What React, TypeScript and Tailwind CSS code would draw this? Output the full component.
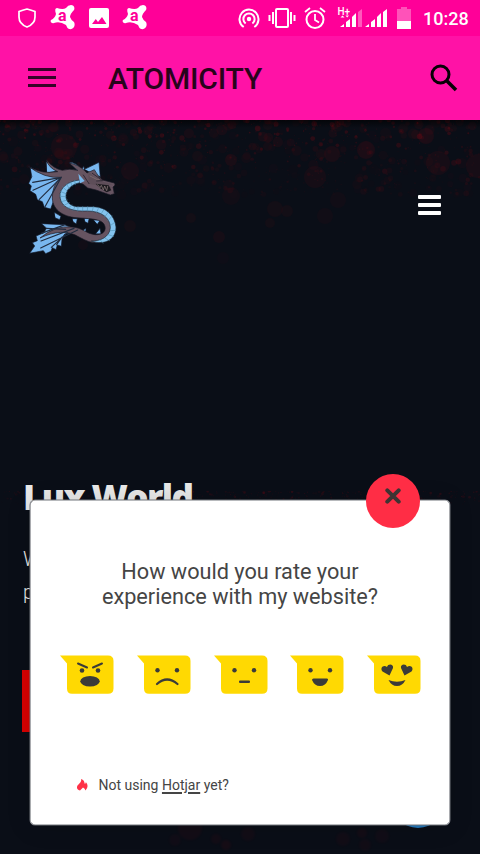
import type { ReactNode } from 'react';

type Speck = { x: number; y: number; r: number; o: number };

function makeSpecks(count: number, seed: number, width: number, height: number, max: number): Speck[] {
  let s = seed;
  const rnd = () => {
    s = (s * 16807) % 2147483647;
    return s / 2147483647;
  };
  return Array.from({ length: count }, () => {
    const x = rnd() * width;
    const depth = Math.pow(rnd(), 1.4);
    const r = 0.5 + Math.pow(rnd(), 3) * max;
    return { x, y: depth * height, r, o: (0.08 + rnd() * 0.28) * (1 - depth * 0.7) * (r > 3 ? 0.35 : 1) };
  });
}

const topSpecks = makeSpecks(950, 4242, 480, 75, 5);
const bandSpecks = makeSpecks(420, 977, 480, 13, 1);
const footSpecks: Speck[] = [
  { x: 190, y: 8, r: 12, o: 0.13 }, { x: 175, y: 20, r: 6, o: 0.09 }, { x: 226, y: 25, r: 5, o: 0.16 },
  { x: 216, y: 19, r: 5, o: 0.12 }, { x: 248, y: 14, r: 7, o: 0.1 }, { x: 343, y: 19, r: 7, o: 0.1 },
  { x: 362, y: 13, r: 5, o: 0.12 }, { x: 382, y: 16, r: 7, o: 0.09 }, { x: 365, y: 25, r: 6, o: 0.1 },
];
const lowSpecks: Speck[] = [
  { x: 219, y: 117, r: 6, o: 0.09 }, { x: 223, y: 138, r: 6, o: 0.04 }, { x: 130, y: 106, r: 6, o: 0.07 },
  { x: 191, y: 98, r: 5, o: 0.07 }, { x: 275, y: 89, r: 8, o: 0.07 }, { x: 287, y: 91, r: 6, o: 0.07 },
  { x: 270, y: 103, r: 5, o: 0.07 }, { x: 325, y: 96, r: 8, o: 0.06 }, { x: 338, y: 80, r: 8, o: 0.06 },
  { x: 315, y: 57, r: 11, o: 0.09 }, { x: 438, y: 43, r: 12, o: 0.1 }, { x: 478, y: 46, r: 12, o: 0.11 },
  { x: 426, y: 16, r: 8, o: 0.14 }, { x: 366, y: 30, r: 9, o: 0.14 }, { x: 332, y: 34, r: 8, o: 0.12 },
  { x: 231, y: 40, r: 6, o: 0.13 }, { x: 130, y: 51, r: 9, o: 0.1 }, { x: 64, y: 27, r: 13, o: 0.1 },
  { x: 231, y: 76, r: 9, o: 0.06 }, { x: 83, y: 125, r: 5, o: 0.06 },
];

function Specks({ items, height, className }: { items: Speck[]; height: number; className: string }) {
  return (
    <svg className={className} width="480" height={height} viewBox={`0 0 480 ${height}`} fill="#a50812">
      {items.map((p, i) => (
        <circle key={i} cx={p.x} cy={p.y} r={p.r} opacity={p.o} />
      ))}
    </svg>
  );
}

function AvastIcon() {
  return (
    <svg width="26" height="26" viewBox="0 0 26 26">
      <path d="M7 3Q13 5 16 3Q18 0 21 0C24 0 25 3 24 5Q20 9 20 12Q21 15 24 17C26 21 23 25 19 24Q17 23 16 20Q10 16 4 18C1 19 0 16 1 15Q5 13 6 9Q4 3 7 3Z" fill="white" />
      <text x="8" y="15.500" fill="#ff0098" className="font-[family-name:Roboto] text-[16px] font-bold">a</text>
    </svg>
  );
}

function StatusBar() {
  return (
    <div className="flex h-9 items-center bg-[#ff0098] text-white">
      <svg className="ml-[17px]" width="20" height="22" viewBox="0 0 20 22" fill="none" stroke="white" strokeWidth="1.7">
        <path d="M10 2Q14.5 3 18 4.6V10C18 15 14.5 18.3 10 20C5.500 18.300 2 15 2 10V4.600Q5.500 3 10 2Z" />
      </svg>
      <div className="ml-[13px]"><AvastIcon /></div>
      <svg className="ml-[13px]" width="20" height="20" viewBox="0 0 20 20">
        <rect width="20" height="20" rx="2" fill="white" />
        <path d="M3 16L6.800 11L9 14L13 9L17.500 16Z" fill="#ff0098" />
      </svg>
      <div className="ml-[13px]"><AvastIcon /></div>
      <svg className="ml-[89px]" width="24" height="22" viewBox="0 0 24 22" fill="none" stroke="white" strokeWidth="2">
        <path d="M6.700 20A9.500 9.500 0 1 1 17.300 20M8.600 16.500A5.600 5.600 0 1 1 15.400 16.500" />
        <circle cx="12" cy="12" r="2.200" fill="white" stroke="none" />
      </svg>
      <svg className="ml-[7px]" width="28" height="22" viewBox="0 0 28 22" fill="none" stroke="white" strokeWidth="2">
        <rect x="8" y="2" width="12" height="18" rx="1" />
        <path d="M5 5V17M1.500 8V14M23 5V17M26.500 8V14" />
      </svg>
      <svg className="ml-[8px]" width="22" height="22" viewBox="0 0 22 22" fill="none" stroke="white" strokeWidth="2">
        <circle cx="11" cy="12.500" r="8.500" />
        <path d="M1 5L6 1M16 1L21 5M11 7V13L15 15.500" strokeWidth="1.800" />
      </svg>
      <svg className="ml-[11px]" width="52" height="24" viewBox="0 0 52 24" fill="white">
        <text x="0.500" y="8.500" className="text-[10px] font-medium">H+</text>
        <path d="M3.500 11.500L5.500 9.500L7.500 11.500M8.500 9.500H12L10.200 11.500Z" />
        <path d="M3 21L7 18V21ZM9 16L13 13V21H9ZM15 11L19 7V21H15ZM28 21L32 18V21ZM34 16L38 13V21H34ZM40 11L44 7V21H40ZM46 6L50 3V21H46Z" />
        <path d="M21 6L25 3V21H21Z" opacity=".35" />
      </svg>
      <svg className="ml-[8px]" width="14" height="24" viewBox="0 0 14 24" fill="white">
        <path d="M4 1H10V3H14V15H0V3H4Z" opacity=".32" />
        <path d="M0 15H14V23H0Z" />
      </svg>
      <span className="ml-[12px] mt-[1px] whitespace-nowrap text-[18px] font-medium leading-5">10:28</span>
    </div>
  );
}

function AppBar() {
  return (
    <div className="flex h-[84px] items-center bg-[#ff12a6]">
      <div className="ml-7 mt-[-1px] flex w-7 flex-col gap-[5px]">
        <span className="h-[3px] bg-[#360329]" />
        <span className="h-[3px] bg-[#360329]" />
        <span className="h-[3px] bg-[#360329]" />
      </div>
      <h1 className="ml-[52px] mt-[2px] flex-1 text-[30px] font-medium leading-9 tracking-[-0.2px] text-[#29031b]">ATOMICITY</h1>
      <svg className="mr-[22px] mt-[-1px]" width="28" height="28" viewBox="0 0 28 28" fill="none" stroke="#080006" strokeWidth="3">
        <circle cx="10.500" cy="10.500" r="8.500" />
        <path d="M16.500 16.500L26 26" strokeWidth="3.600" />
      </svg>
    </div>
  );
}

function Dragon() {
  return (
    <svg width="120" height="120" viewBox="0 0 360 360" strokeLinejoin="round" strokeLinecap="round">
      <g fill="#79b7ef" stroke="#101725" strokeWidth="2">
        <path d="M94 50L128 78L96 84ZM163 52Q182 52 196 69L186 76ZM208 73L252 52L256 96L234 86ZM187 88L207 64L211 104L193 114Z" />
        <path d="M46 67Q87 92 141 96L107 192L88 187L82 170L67 164L62 148L45 137L49 123L41 115L50 96Z" />
        <path d="M118 202L138 214L134 224L121 219ZM172 221L187 221L184 237L175 231ZM208 220L223 219L219 235L210 230ZM236 225L256 225L247 238ZM242 266L255 250L258 266ZM195 263L213 249L212 264Z" />
        <path d="M80 236L148 239L197 258L149 267L141 283L139 304L127 300L123 314L112 308L108 319L92 326L85 317L44 325L59 303L52 293L67 287L63 273L87 263L94 250Z" />
      </g>
      <path d="M40 64Q70 82 102 82L128 80Q100 68 94 44Q114 70 142 76Q163 69 188 76L162 54Q190 58 210 78L216 84L238 74Q248 94 263 105L298 114Q304 120 294 126L298 146L286 150L243 135L218 129L204 117Q172 106 153 139C141 166 157 185 184 190L246 190C281 196 304 225 297 256C286 287 255 298 222 290Q208 285 192 276C158 255 118 259 75 279Q121 240 171 246C203 248 213 266 240 269C265 271 276 255 268 239C260 223 231 221 195 219C147 218 113 196 112 159Q111 119 139 97Q90 102 40 64Z" fill="#665461" stroke="#171722" strokeWidth="2" />
      <path d="M194 105C160 107 132 130 135 155C138 187 169 200 216 198C260 198 286 219 286 248C284 277 254 289 229 288C271 303 304 281 303 246C299 211 273 186 235 185L184 185C160 181 149 164 154 145Q162 119 194 113Z" fill="#83c3ee" stroke="#1c2836" strokeWidth="2" />
      <path d="M139 97L90 185M139 97L73 163M139 97L54 136M139 97L53 112M150 239L79 265M177 250L78 288M188 255L77 309M157 263L109 307M141 276L125 299M94 250L152 253" fill="none" stroke="#202c3f" strokeWidth="3.500" />
      <path d="M179 107L181 119M166 110L172 123M154 117L163 131M143 126L156 138M137 140L153 146M135 154L153 155M139 170L157 165M147 181L163 173M159 190L171 180M174 196L180 185M188 198L189 185M203 198L203 185M217 198L218 185M232 198L235 185M245 202L251 188M258 207L267 193M269 216L280 201M279 227L291 213M286 242L299 232M286 257L302 256M279 269L296 274M269 279L284 287M256 285L264 295" stroke="#4c8cad" strokeWidth="2" opacity=".8" />
      <path d="M221 78L238 98L268 112L292 118L276 121L291 127L278 134L264 135L242 120L220 116" fill="#5e4e59" />
      <path d="M242 116L281 121L289 136L275 142L256 130Z" fill="#1b191e" />
      <path d="M248 119L255 128L259 121L265 135L269 123L275 137L278 124M225 93L249 105L255 100" fill="none" stroke="#7f7071" strokeWidth="2.500" />
      <path d="M232 85L263 107L245 108M205 90L222 116" fill="none" stroke="#322b36" strokeWidth="3" />
      <path d="M190 86L209 108L195 115Z" fill="#78b9ed" />
    </svg>
  );
}

function Face({ children }: { children: ReactNode }) {
  return (
    <button className="block" type="button">
      <svg width="54" height="40" viewBox="0 0 54 40" fill="#3b3b39">
        <path d="M0 0.500H48Q53.500 0.500 53.500 6V33.500Q53.500 38.800 48 38.800H12Q7 38.800 7 33.500V8.500Z" fill="#ffd902" />
        {children}
      </svg>
    </button>
  );
}

function Eyes() {
  return <><circle cx="20.500" cy="15.200" r="2.200" /><circle cx="40" cy="15.200" r="2.200" /></>;
}

function Survey() {
  return (
    <section className="absolute left-[30px] top-[380px] flex h-[325px] w-[420px] flex-col rounded-[5px] bg-white text-[#454545] shadow-[inset_0_0_0_0.6px_#71747a,0_0_0_0.5px_#71747a,0_2px_24px_#0002]">
      <button aria-label="Close" type="button" className="absolute left-[336px] top-[-26px] flex size-[54px] justify-center rounded-full bg-[#ff2d45] pt-[14px]">
        <svg width="16" height="16" viewBox="0 0 16 16" stroke="#3e3433" strokeWidth="4" strokeLinecap="round">
          <path d="M2.300 2.300L13.700 13.700M13.700 2.300L2.300 13.700" />
        </svg>
      </button>
      <h2 className="mt-[59px] text-center text-[21.700px] font-normal leading-[25px]">How would you rate your<br />experience with my website?</h2>
      <div className="ml-[30px] mt-[46px] flex gap-[22.800px]">
        <Face>
          <circle cx="22" cy="15.500" r="2.300" /><circle cx="38" cy="15.500" r="2.300" />
          <path d="M18 8.500L27 12.500M42 8.500L33 12.500" fill="none" stroke="#3b3b39" strokeWidth="2" strokeLinecap="round" />
          <ellipse cx="30" cy="26.300" rx="9.700" ry="5.300" />
        </Face>
        <Face>
          <Eyes />
          <path d="M20 29Q30 20 40.500 29" fill="none" stroke="#3b3b39" strokeWidth="2.200" strokeLinecap="round" />
        </Face>
        <Face><Eyes /><rect x="25" y="25.500" width="11" height="2.500" rx="1" /></Face>
        <Face><Eyes /><path d="M22 25Q22 23.500 23.500 23.500H37Q38.400 23.500 38 25Q35.500 31 30 31Q24.500 31 22 25Z" /></Face>
        <Face>
          <path d="M22.500 20.500L15.500 16.500C12.500 13 16.500 9 20 12C21 8 27 9 26 13Z" />
          <path d="M37.500 20.500L44.500 16.500C47.500 13 43.500 9 40 12C39 8 33 9 34 13Z" />
          <path d="M21.500 25Q30 28.500 38.500 25Q35.500 31 30 31Q24.500 31 21.500 25Z" />
        </Face>
      </div>
      <div className="ml-[46px] mt-[80px] flex items-center text-[14px] leading-5">
        <svg width="12" height="14" viewBox="0 0 12 14" fill="#ff3147">
          <path d="M5 1C9 2.500 8 4.500 9 6Q10 5 9.800 4Q13.500 8 9.500 12.500Q9 10.500 7 9.500Q6 10.500 4 12.500C0 11.500 .5 8 2.500 6.500Q6 4 5 1Z" />
        </svg>
        <p className="ml-[10.500px]">Not using <a className="underline decoration-[1.5px] underline-offset-2">Hotjar</a> yet?</p>
      </div>
    </section>
  );
}

export default function App() {
  return (
    <div className="h-[854px] w-[480px] overflow-hidden bg-[#0a0e17] font-[Roboto,sans-serif]">
      <StatusBar />
      <AppBar />
      <main className="relative h-[734px] overflow-hidden bg-[#0a0e17]">
        <Specks items={[...topSpecks, ...lowSpecks]} height={150} className="absolute left-0 top-0 opacity-80 blur-[0.7px]" />
        <Specks items={bandSpecks} height={16} className="absolute left-0 top-[371px] opacity-60 blur-[0.4px]" />
        <Specks items={footSpecks} height={34} className="absolute bottom-0 left-0 opacity-50 blur-[0.8px]" />
        <div className="absolute inset-x-0 top-0 h-2 bg-gradient-to-b from-black/60 to-transparent" />
        <header className="relative flex h-[145px] justify-between pl-[15px] pr-[39px] pt-[25px]">
          <Dragon />
          <div className="mt-[50px] flex h-5 w-[23px] flex-col justify-between">
            <span className="h-1 rounded-[1px] bg-white" />
            <span className="h-1 rounded-[1px] bg-white" />
            <span className="h-1 rounded-[1px] bg-white" />
          </div>
        </header>
        <div className="relative pl-[22px] pt-[210px] text-[#e8e8e8]">
          <h2 className="ml-px whitespace-nowrap font-[family-name:Open_Sans] text-[35px] font-extrabold leading-[44px] tracking-[-1.600px]">Lux World</h2>
          <p className="ml-px mt-[24px] text-[20px] font-light leading-[33px]">W<br />p</p>
          <div className="mt-[61px] h-[62px] w-[160px] bg-[#d90000]" />
        </div>
        <div className="absolute left-[390px] top-[652px] size-14 rounded-full bg-[#2478bb]" />
        <Survey />
      </main>
    </div>
  );
}
